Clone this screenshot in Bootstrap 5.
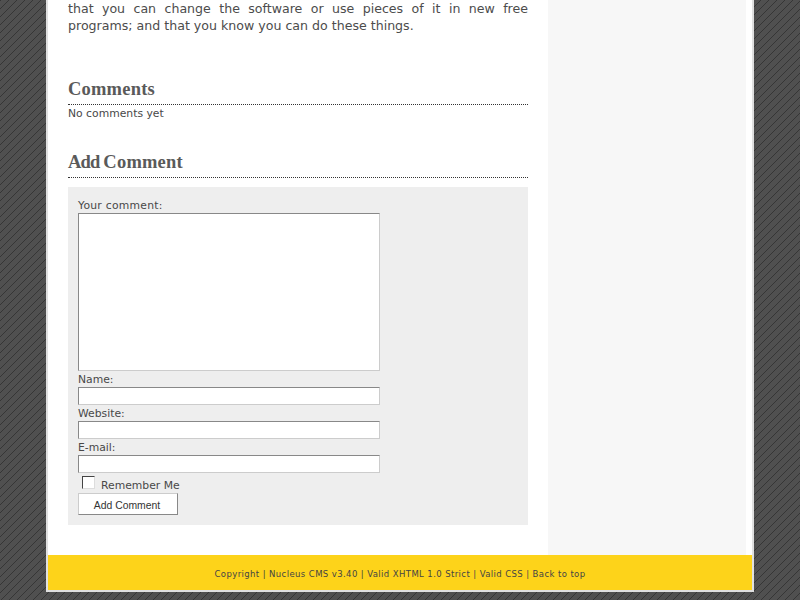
<!DOCTYPE html>
<html lang="en"><head><meta charset="utf-8">
<title>Comments</title>
<link href="https://cdn.jsdelivr.net/npm/bootstrap@5.3.0/dist/css/bootstrap.min.css" rel="stylesheet">
<style>
html,body{height:600px;overflow:hidden}
body{background-color:#505050;background-image:repeating-linear-gradient(135deg,#363636 0,#363636 1px,#505050 1px,#505050 5.657px);font-family:"DejaVu Sans",sans-serif;font-size:10.8px;color:#484848;line-height:17px}
.sheet{width:708px;margin-left:46px;height:592px;border:2px solid #e0e0e0;border-top:0;background:#fff}
.upper{height:555px}
.mainpane{width:500px;padding:0 20px 0 20px}
.sidepane{width:198px;background:#f7f7f7}
.lede{font-size:12.6px;text-align:justify;margin:0;line-height:17px;color:#4c4c4c}
.heading{font-family:"Liberation Serif",serif;font-weight:700;font-size:18.5px;letter-spacing:.2px;line-height:20px;color:#5a5a5a;border-bottom:1px dotted #333;margin:0;padding:0 0 5px;word-spacing:-1px}
.tight{letter-spacing:-.8px}
.commentbox{background:#eee;padding:10px;margin-top:9px;height:338px}
.commentbox label{display:block;line-height:14px}
.wide-label{margin-top:2px;letter-spacing:.25px}
.txtarea{display:block;width:302px;height:158px;background:#fff;border:1px solid;border-color:#888 #ccc #ccc #888;margin:0;resize:none}
.txtline{display:block;width:302px;height:18px;background:#fff;border:1px solid;border-color:#888 #ccc #ccc #888;margin:0 0 2px}
.spaced-top{margin-top:2px}
.sendbtn{display:block;width:100px;height:22px;background:#fff;border:1px solid;border-color:#ccc #888 #888 #ccc;font-family:"Liberation Sans",sans-serif;font-size:10.4px;color:#333;padding:0 2px 0 0;line-height:24px}
.tick{width:13px;height:13px;margin:-3px 6px 0 4px;background:#fff;border:1px solid;border-color:#444 #ddd #ddd #444;appearance:none}
.footbar{height:35px;background:#fdd31a;font-size:8.5px;letter-spacing:.4px;color:#444;padding-top:3px}
</style></head>
<body>
<div class="sheet">
  <div class="upper d-flex">
    <div class="mainpane">
      <p class="lede">that you can change the software or use pieces of it in new free programs; and that you know you can do these things.</p>
      <h3 class="heading" style="margin-top:45px">Comments</h3>
      <div>No comments yet</div>
      <h3 class="heading" style="margin-top:30px"><span class="tight">Add</span> Comment</h3>
      <form class="commentbox">
        <label for="c1" class="wide-label">Your comment:</label>
        <textarea id="c1" class="txtarea"></textarea>
        <label for="c2" class="spaced-top">Name:</label><input id="c2" class="txtline">
        <label for="c3">Website:</label><input id="c3" class="txtline">
        <label for="c4">E-mail:</label><input id="c4" class="txtline">
        <div class="d-flex align-items-center"><input id="c5" type="checkbox" class="tick"><label for="c5" class="mt-1">Remember Me</label></div>
        <button type="button" class="sendbtn">Add Comment</button>
      </form>
    </div>
    <div class="sidepane"></div>
    <div class="flex-grow-1"></div>
  </div>
  <div class="footbar d-flex align-items-center justify-content-center">Copyright | Nucleus CMS v3.40 | Valid XHTML 1.0 Strict | Valid CSS | Back to top</div>
</div>
<script src="https://cdn.jsdelivr.net/npm/bootstrap@5.3.0/dist/js/bootstrap.bundle.min.js"></script>
</body></html>
